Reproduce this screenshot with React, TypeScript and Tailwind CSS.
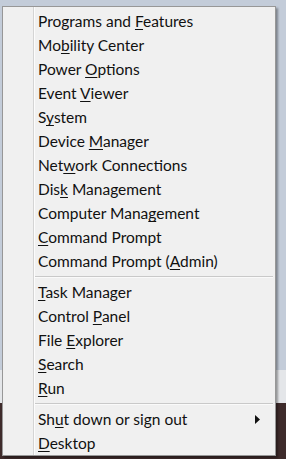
import React from "react";

type Item = { pre: string; key: string; post: string; arrow?: boolean };

const group1: Item[] = [
  { pre: "Programs and ", key: "F", post: "eatures" },
  { pre: "Mo", key: "b", post: "ility Center" },
  { pre: "Power ", key: "O", post: "ptions" },
  { pre: "Event ", key: "V", post: "iewer" },
  { pre: "S", key: "y", post: "stem" },
  { pre: "Device ", key: "M", post: "anager" },
  { pre: "Net", key: "w", post: "ork Connections" },
  { pre: "Dis", key: "k", post: " Management" },
  { pre: "Computer Mana", key: "g", post: "ement" },
  { pre: "", key: "C", post: "ommand Prompt" },
  { pre: "Command Prompt (", key: "A", post: "dmin)" },
];

const group2: Item[] = [
  { pre: "", key: "T", post: "ask Manager" },
  { pre: "Control ", key: "P", post: "anel" },
  { pre: "File ", key: "E", post: "xplorer" },
  { pre: "", key: "S", post: "earch" },
  { pre: "", key: "R", post: "un" },
];

const group3: Item[] = [
  { pre: "Sh", key: "u", post: "t down or sign out", arrow: true },
  { pre: "", key: "D", post: "esktop" },
];

function Row({ item }: { item: Item }) {
  return (
    <div className="flex h-[24px] items-center pt-[2px] pl-[35px] pr-[14px]">
      <span className="flex-1 whitespace-nowrap">
        {item.pre}
        <span className="underline underline-offset-[2px] decoration-[1px]">{item.key}</span>
        {item.post}
      </span>
      {item.arrow && (
        <svg width="5" height="9" viewBox="0 0 5 9" className="mr-[1px] mb-[2px]">
          <path d="M0 0 L5 4.5 L0 9 Z" fill="#111" />
        </svg>
      )}
    </div>
  );
}

function Sep() {
  return (
    <div className="flex h-[7px] items-center pl-[31px] pr-[2px]">
      <div className="h-[2px] w-full border-t border-t-[#c9c9c9] border-b border-b-[#fafafa]" />
    </div>
  );
}

export default function App() {
  return (
    <div
      className="w-[286px] h-[459px] overflow-hidden pt-[6px] pl-[2px]"
      style={{
        background:
          "linear-gradient(to bottom, #c3ccd9 0px, #c3ccd9 370px, #e4e6e9 370px, #e4e6e9 403px, #3e2b2b 403px, #3e2b2b 459px)",
      }}
    >
      <div
        className="relative w-[274px] h-[450px] border border-[#979797] bg-[#f0f0f0] pt-[2px] text-[15.5px] text-[#111] shadow-[2px_2px_2px_rgba(0,0,0,0.35)]"
        style={{ fontFamily: 'Lato, "Open Sans", sans-serif' }}
      >
        <div className="absolute left-[30px] top-0 bottom-0 w-[2px] border-l border-l-[#d4d4d4] border-r border-r-[#fcfcfc]" />
        {group1.map((it, i) => (
          <Row key={"a" + i} item={it} />
        ))}
        <Sep />
        {group2.map((it, i) => (
          <Row key={"b" + i} item={it} />
        ))}
        <Sep />
        {group3.map((it, i) => (
          <Row key={"c" + i} item={it} />
        ))}
      </div>
    </div>
  );
}
